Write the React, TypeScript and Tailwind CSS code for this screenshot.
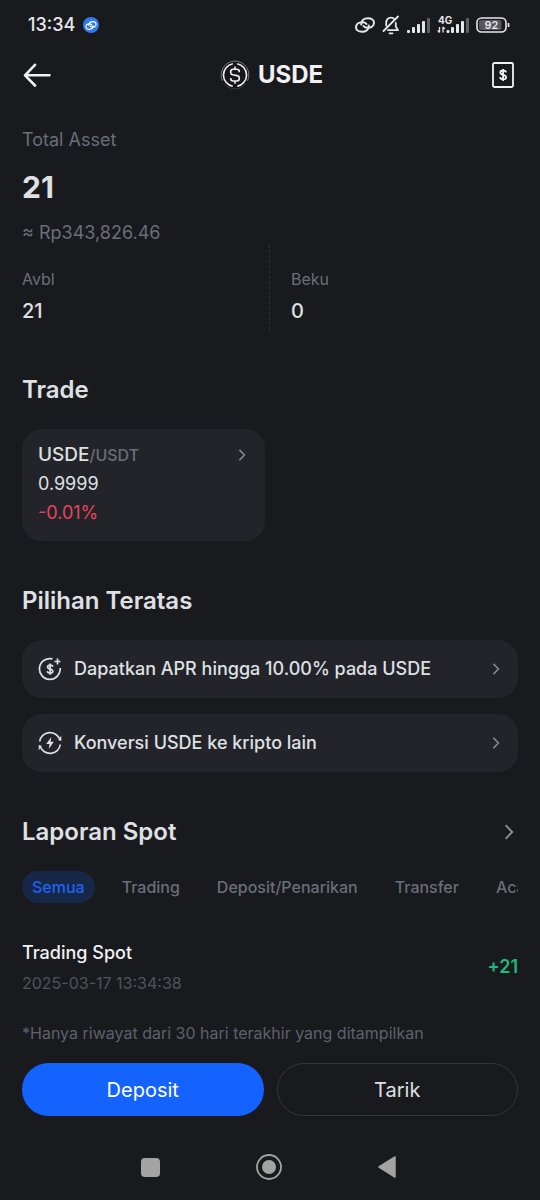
import type { ReactNode } from "react";

const TABS = ["Semua", "Trading", "Deposit/Penarikan", "Transfer", "Acara"];

function LinkGlyph({ className }: { className: string }) {
  return (
    <svg viewBox="0 0 20 16" fill="none" stroke="currentColor" strokeWidth="2" strokeLinecap="round" className={className}>
      <path d="M6.200 7.500C6.200 3.500 9 1.200 13 1.200c3.500 0 6 1.800 6 4.600 0 3-2.600 5-6.200 5-2 0-3.500-.6-4.300-1.800" />
      <path d="M13.800 8.500c0 4-2.800 6.300-6.800 6.300-3.500 0-6-1.800-6-4.600 0-3 2.600-5 6.200-5 2 0 3.500.6 4.300 1.800" />
    </svg>
  );
}

function BellOff() {
  return (
    <svg viewBox="0 0 18 20" fill="none" stroke="currentColor" strokeWidth="1.800" strokeLinecap="round" strokeLinejoin="round" className="h-5 w-[18px]">
      <path d="M4.200 10.500V8.500C4.200 5 6 2.700 9 2.700c1.600 0 2.800.7 3.600 1.800M13.800 8v3.500l2.200 3.700H6M16 1.500 1.500 16" />
      <path d="M7.500 18.300h3" />
    </svg>
  );
}

function Signal() {
  return (
    <svg viewBox="0 0 23 20" fill="currentColor" className="h-5 w-[23px]">
      <rect x="0" y="15" width="3" height="3" rx="1" />
      <rect x="5" y="12" width="3" height="6" rx="1" />
      <rect x="10" y="9" width="3" height="9" rx="1" />
      <rect x="15" y="6" width="3" height="12" rx="1" />
      <rect x="20" y="3" width="3" height="15" rx="1" opacity=".35" />
    </svg>
  );
}

function DataSignal() {
  return (
    <svg viewBox="0 0 32 20" fill="currentColor" className="h-5 w-8">
      <text x="1" y="9" fontSize="10" fontWeight="700">4G</text>
      <path d="M2.500 12v5.500M.800 15.500l1.700 2M6 17.500V12M7.700 14 6 12" stroke="currentColor" strokeWidth="1.300" fill="none" />
      <rect x="9.500" y="15" width="3" height="3" rx="1" />
      <rect x="14" y="12" width="3" height="6" rx="1" />
      <rect x="19" y="9" width="3" height="9" rx="1" />
      <rect x="24" y="6" width="3" height="12" rx="1" />
      <rect x="29" y="3" width="3" height="15" rx="1" opacity=".35" />
    </svg>
  );
}

function Chevron({ className }: { className: string }) {
  return (
    <svg viewBox="0 0 8 14" fill="none" stroke="currentColor" strokeWidth="1.800" className={className}>
      <path d="m1 1 5.800 6L1 13" />
    </svg>
  );
}

function CoinLogo() {
  return (
    <svg viewBox="0 0 30 30" fill="none" stroke="#f0f0f2" className="size-[30px]">
      <circle cx="15" cy="15" r="14.500" fill="#17171a" stroke="none" />
      <path d="M2.500 21A14 14 0 0 1 15 1a14 14 0 0 1 12.500 20" stroke="#85868a" strokeWidth=".9" />
      <path d="M4 23.500A14 14 0 0 0 26 23.500" stroke="#3c3d41" strokeWidth=".9" />
      <path d="M12.800 3.700a11.500 11.500 0 0 0 0 22.600M17.200 3.700a11.500 11.500 0 0 1 0 22.600" strokeWidth="1.600" />
      <path d="M19.300 12.200v-.6c0-1.600-1-2.400-2.500-2.400h-3.600c-1.500 0-2.500.9-2.500 2.400v.8c0 1.500 1 2.100 2.200 2.400l4.200.8c1.300.3 2.200 1 2.200 2.400v.6c0 1.500-1 2.400-2.500 2.400h-3.600c-1.500 0-2.500-.9-2.500-2.400V18M15 6.500v2.700M15 21v2.700" strokeWidth="1.600" />
    </svg>
  );
}

function EarnIcon() {
  return (
    <svg viewBox="0 0 24 24" fill="none" stroke="currentColor" strokeWidth="1.700" className="size-6">
      <path d="M14.500 1.900A10.400 10.400 0 1 0 22.200 11" />
      <path d="M19.500 1.500v6M16.500 4.500h6" />
      <path d="M14.700 9.900c-.2-1.100-1.200-1.700-2.600-1.700-1.500 0-2.500.7-2.500 1.800 0 2.800 5.200 1.400 5.200 4.200 0 1.100-1.100 1.900-2.700 1.900-1.500 0-2.600-.7-2.800-1.900M12.100 6.500v11.300" />
    </svg>
  );
}

function ConvertIcon() {
  return (
    <svg viewBox="0 0 24 24" fill="none" stroke="currentColor" strokeWidth="1.700" className="size-6">
      <path d="M1.700 10.500A10.400 10.400 0 0 1 21.800 8.500M22.300 13.500A10.400 10.400 0 0 1 2.200 15.500" />
      <path d="M23.300 4.500v5.500l-3-.8zM.700 19.500V14l3 .8z" fill="currentColor" stroke="none" />
      <path d="M13.200 6 8.300 13h3.200l-.7 5 5-7.200h-3.200z" fill="currentColor" stroke="none" />
    </svg>
  );
}

function StatusBar() {
  return (
    <div className="flex h-[50px] items-center justify-between pl-7 pr-[30px] text-[#e6e7ea]">
      <div className="flex items-center gap-2">
        <span className="text-[18px] leading-6 font-medium">13:34</span>
        <span className="flex size-4 items-center justify-center rounded-full bg-[#2f7bee] text-white">
          <LinkGlyph className="h-[9px] w-3" />
        </span>
      </div>
      <div className="flex items-center gap-[7px]">
        <LinkGlyph className="h-4 w-5" />
        <BellOff />
        <Signal />
        <DataSignal />
        <svg viewBox="0 0 34 16" fill="none" className="h-4 w-[34px]">
          <rect x="1" y="1" width="29" height="14" rx="4.500" stroke="currentColor" strokeWidth="1.600" />
          <rect x="3" y="3" width="22.500" height="10" rx="2" fill="#56575b" />
          <path d="M32.500 6v4" stroke="currentColor" strokeWidth="1.700" />
          <text x="15.500" y="12" textAnchor="middle" fontSize="11" fontWeight="600" fill="currentColor">92</text>
        </svg>
      </div>
    </div>
  );
}

function TopBar() {
  return (
    <header className="flex h-[50px] items-center justify-between pl-[23px] pr-[26px] text-[#f0f1f3]">
      <button type="button" aria-label="Kembali">
        <svg viewBox="0 0 28 24" fill="none" stroke="currentColor" strokeWidth="2.600" strokeLinecap="round" strokeLinejoin="round" className="h-6 w-7">
          <path d="M26.500 12.300H2M12 1.800 2 12.300 12 22.500" />
        </svg>
      </button>
      <div className="flex items-center gap-2">
        <CoinLogo />
        <h1 className="text-[24px] leading-7 font-bold">USDE</h1>
      </div>
      <button type="button" aria-label="Riwayat">
        <svg viewBox="0 0 22 26" fill="none" stroke="currentColor" strokeWidth="1.800" className="h-[26px] w-[22px]">
          <rect x="1" y="1" width="20" height="24" rx="1.500" />
          <path d="M14 10.400c-.2-1.200-1.300-1.900-2.900-1.900s-2.800.8-2.800 2c0 3.100 5.800 1.600 5.800 4.700 0 1.200-1.200 2.100-2.900 2.100-1.800 0-3-.8-3.200-2.100M11.100 7v12" />
        </svg>
      </button>
    </header>
  );
}

function ActionRow({ icon, children }: { icon: ReactNode; children: ReactNode }) {
  return (
    <button type="button" className="flex h-[58px] items-center rounded-[20px] bg-[#232429] pl-4 pr-[18px] text-left">
      {icon}
      <span className="ml-3 flex-1 text-[18px] leading-6 font-medium">{children}</span>
      <Chevron className="h-3 w-2 text-[#85888f]" />
    </button>
  );
}

export default function App() {
  return (
    <div className="min-h-screen bg-[#191a1e] font-['Inter',sans-serif] text-[#dfe0e4]">
      <StatusBar />
      <TopBar />

      <main className="px-[22px] pt-7">
        <section>
          <h2 className="text-[18px] leading-6 text-[#6a6e7a]">Total Asset</h2>
          <p className="mt-[15px] text-[30px] leading-10 font-bold">21</p>
          <p className="mt-[14px] text-[18px] leading-6 text-[#6a6e7a]">≈ Rp343,826.46</p>
          <dl className="grid grid-cols-2">
            <div className="border-r border-dashed border-[#303238] pt-6 pb-[5px]">
              <dt className="text-[16px] leading-5 text-[#6a6e7a]">Avbl</dt>
              <dd className="mt-2 text-[20px] leading-7 font-medium">21</dd>
            </div>
            <div className="pt-6 pb-[5px] pl-[21px]">
              <dt className="text-[16px] leading-5 text-[#6a6e7a]">Beku</dt>
              <dd className="mt-2 text-[20px] leading-7 font-medium">0</dd>
            </div>
          </dl>
        </section>

        <section className="mt-[45px]">
          <h2 className="text-[24px] leading-[30px] font-semibold">Trade</h2>
          <div className="mt-6 grid grid-cols-2 gap-[10px]">
            <a href="#trade" className="rounded-[20px] bg-[#232429] px-4 pt-3 pb-[14px]">
              <div className="flex items-center justify-between leading-7">
                <span className="text-[19px] font-medium">
                  USDE<span className="text-[16px] text-[#6a6e7a]">/USDT</span>
                </span>
                <Chevron className="mr-[3px] h-3 w-2 text-[#85888f]" />
              </div>
              <div className="text-[18px] leading-[29px]">0.9999</div>
              <div className="text-[18px] leading-[29px] text-[#e8435f]">-0.01%</div>
            </a>
          </div>
        </section>

        <section className="mt-[45px]">
          <h2 className="text-[24px] leading-[30px] font-semibold">Pilihan Teratas</h2>
          <div className="mt-6 flex flex-col gap-4">
            <ActionRow icon={<EarnIcon />}>Dapatkan APR hingga 10.00% pada USDE</ActionRow>
            <ActionRow icon={<ConvertIcon />}>Konversi USDE ke kripto lain</ActionRow>
          </div>
        </section>

        <section className="mt-[45px]">
          <a href="#laporan" className="flex items-center justify-between pr-1">
            <h2 className="text-[24px] leading-[30px] font-semibold">Laporan Spot</h2>
            <Chevron className="h-4 w-[10px] text-[#85888f]" />
          </a>
          <div className="mt-6 flex gap-[17px] overflow-hidden">
            {TABS.map((tab, i) => (
              <button
                key={tab}
                type="button"
                className={
                  i === 0
                    ? "h-8 shrink-0 rounded-full bg-[#172747] px-[10px] text-[16px] font-medium text-[#1f63f5]"
                    : "h-8 shrink-0 rounded-full px-[10px] text-[16px] font-medium text-[#6a6e7a]"
                }
              >
                {tab}
              </button>
            ))}
          </div>

          <div className="mt-[38px] flex items-center justify-between">
            <div>
              <p className="text-[18px] leading-6 font-medium text-[#f0f1f3]">Trading Spot</p>
              <p className="mt-2 text-[16px] leading-5 text-[#50535c]">2025-03-17 13:34:38</p>
            </div>
            <span className="text-[18px] leading-6 font-semibold text-[#1fb877]">+21</span>
          </div>
          <p className="mt-[30px] text-[16px] leading-5 text-[#5e616b]">*Hanya riwayat dari 30 hari terakhir yang ditampilkan</p>
        </section>

        <div className="mt-5 grid grid-cols-2 gap-[13px]">
          <button type="button" className="h-[53px] rounded-full bg-[#1463ff] text-[20px] text-white">Deposit</button>
          <button type="button" className="h-[53px] rounded-full border border-[#34363c] text-[20px]">Tarik</button>
        </div>
      </main>

      <nav className="mx-auto mt-[38px] flex w-1/2 items-center justify-between text-[#a3a3a3]">
        <button type="button" aria-label="Aplikasi terbaru" className="ml-[6px] size-[19px] rounded-[4px] bg-[#a3a3a3]" />
        <button type="button" aria-label="Beranda">
          <svg viewBox="0 0 26 26" fill="none" stroke="currentColor" strokeWidth="1.800" className="size-[26px]">
            <circle cx="13" cy="13" r="12" />
            <circle cx="13" cy="13" r="7" fill="currentColor" stroke="none" />
          </svg>
        </button>
        <button type="button" aria-label="Mundur" className="mr-[9px]">
          <svg viewBox="0 0 18 22" fill="currentColor" stroke="currentColor" strokeWidth="1.500" strokeLinejoin="round" className="h-[22px] w-[18px]">
            <path d="M1 11 17 1v20z" />
          </svg>
        </button>
      </nav>
    </div>
  );
}
